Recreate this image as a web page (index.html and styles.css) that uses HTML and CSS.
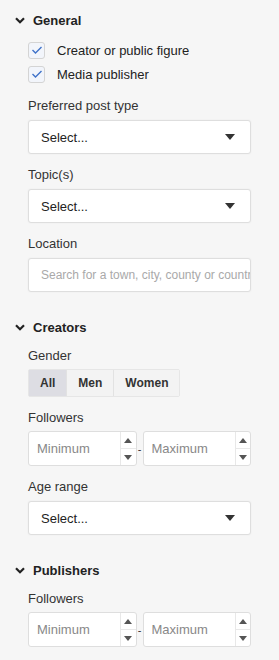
FILE: index.html
```html
<!DOCTYPE html>
<html lang="en">
<head>
  <meta charset="UTF-8">
  <meta name="viewport" content="width=device-width, initial-scale=1.0">
  <title>Filters</title>
  <link rel="stylesheet" href="styles.css">
</head>
<body>
  <div class="panel">

    <div class="section">
      <div class="section-head">
        <svg class="chevron" width="10" height="7" viewBox="0 0 10 7"><path d="M1 1.2 L5 5.2 L9 1.2" fill="none" stroke="#222" stroke-width="2.2"/></svg>
        <span>General</span>
      </div>
      <div class="section-body">
        <div class="checks">
          <label class="check"><span class="box"><svg width="12" height="10" viewBox="0 0 12 10"><path d="M1.5 5 L4.5 8 L10.5 2" fill="none" stroke="#3f72c9" stroke-width="1.4"/></svg></span>Creator or public figure</label>
          <label class="check"><span class="box"><svg width="12" height="10" viewBox="0 0 12 10"><path d="M1.5 5 L4.5 8 L10.5 2" fill="none" stroke="#3f72c9" stroke-width="1.4"/></svg></span>Media publisher</label>
        </div>
        <div class="field">
          <div class="label">Preferred post type</div>
          <div class="select"><span>Select...</span><span class="caret"></span></div>
        </div>
        <div class="field">
          <div class="label">Topic(s)</div>
          <div class="select"><span>Select...</span><span class="caret"></span></div>
        </div>
        <div class="field">
          <div class="label">Location</div>
          <div class="text-input"><input type="text" placeholder="Search for a town, city, county or country"></div>
        </div>
      </div>
    </div>

    <div class="section">
      <div class="section-head">
        <svg class="chevron" width="10" height="7" viewBox="0 0 10 7"><path d="M1 1.2 L5 5.2 L9 1.2" fill="none" stroke="#222" stroke-width="2.2"/></svg>
        <span>Creators</span>
      </div>
      <div class="section-body">
        <div class="field">
          <div class="label">Gender</div>
          <div class="seg">
            <button class="seg-btn active">All</button>
            <button class="seg-btn">Men</button>
            <button class="seg-btn">Women</button>
          </div>
        </div>
        <div class="field">
          <div class="label">Followers</div>
          <div class="range">
            <div class="num"><input type="text" placeholder="Minimum"><div class="spin"><span class="up"></span><span class="down"></span></div></div>
            <span class="dash">-</span>
            <div class="num"><input type="text" placeholder="Maximum"><div class="spin"><span class="up"></span><span class="down"></span></div></div>
          </div>
        </div>
        <div class="field">
          <div class="label">Age range</div>
          <div class="select"><span>Select...</span><span class="caret"></span></div>
        </div>
      </div>
    </div>

    <div class="section">
      <div class="section-head">
        <svg class="chevron" width="10" height="7" viewBox="0 0 10 7"><path d="M1 1.2 L5 5.2 L9 1.2" fill="none" stroke="#222" stroke-width="2.2"/></svg>
        <span>Publishers</span>
      </div>
      <div class="section-body">
        <div class="field">
          <div class="label">Followers</div>
          <div class="range">
            <div class="num"><input type="text" placeholder="Minimum"><div class="spin"><span class="up"></span><span class="down"></span></div></div>
            <span class="dash">-</span>
            <div class="num"><input type="text" placeholder="Maximum"><div class="spin"><span class="up"></span><span class="down"></span></div></div>
          </div>
        </div>
      </div>
    </div>

  </div>
</body>
</html>
```

FILE: styles.css
```css
body {
  margin: 0;
  background-color: #f6f6f6;
  font-family: 'Liberation Sans', Arial, sans-serif;
  font-size: 13px;
  color: #222;
}
.panel {
  padding: 12px 28px 0 14px;
}
.section + .section {
  margin-top: 27px;
}
.section-head {
  display: flex;
  align-items: center;
  height: 16px;
  font-weight: bold;
  font-size: 13px;
}
.chevron {
  margin-left: 1px;
  margin-right: 8px;
}
.section-body {
  padding-left: 14px;
  margin-top: 13px;
}
.checks {
  display: flex;
  flex-direction: column;
  gap: 8px;
  padding-top: 1px;
}
.check {
  display: flex;
  align-items: center;
  height: 16px;
  gap: 12px;
}
.box {
  width: 15px;
  height: 15px;
  border: 1px solid #d4d4d4;
  border-radius: 3px;
  background: #f2f5fb;
  display: flex;
  align-items: center;
  justify-content: center;
}
.checks + .field {
  margin-top: 16px;
}
.field + .field {
  margin-top: 13px;
}
.label {
  height: 16px;
  line-height: 16px;
  margin-bottom: 6px;
  color: #333;
}
.select, .text-input {
  height: 32px;
  background: #fff;
  border: 1px solid #dedede;
  border-radius: 3px;
  box-shadow: 0 0 2px rgba(0, 0, 0, 0.06);
  display: flex;
  align-items: center;
  justify-content: space-between;
  padding: 0 15px 0 12px;
  color: #222;
}
.caret {
  width: 0;
  height: 0;
  border-left: 5px solid transparent;
  border-right: 5px solid transparent;
  border-top: 6px solid #333;
}
.text-input {
  padding: 0 0 0 12px;
  overflow: hidden;
}
.text-input input, .num input {
  border: none;
  outline: none;
  background: transparent;
  font-family: inherit;
  width: 100%;
  padding: 0;
}
.text-input input {
  font-size: 12px;
}
input::placeholder {
  color: #a9a9a9;
}
.seg {
  display: flex;
  width: max-content;
  border: 1px solid #e6e6e6;
  border-radius: 2px;
  margin-top: -1px;
}
.seg-btn {
  height: 26px;
  border: none;
  background: #f3f3f3;
  font-family: inherit;
  font-size: 12px;
  font-weight: bold;
  color: #333;
  padding: 0 11px;
}
.seg-btn + .seg-btn {
  border-left: 1px solid #e2e2e2;
}
.seg-btn.active {
  background: #dddde3;
}
.range {
  display: flex;
  align-items: center;
  margin-top: -1px;
}
.num {
  flex: 1;
  height: 33px;
  display: flex;
  background: #fff;
  border: 1px solid #dedede;
  border-radius: 3px;
}
.num input {
  font-size: 13px;
  padding-left: 8px;
  min-width: 0;
}
.num input::placeholder {
  color: #888;
}
.dash {
  width: 6px;
  text-align: center;
  font-size: 11px;
  color: #333;
}
.spin {
  width: 18px;
  border-left: 1px solid #e8e8e8;
  display: flex;
  flex-direction: column;
}
.spin span {
  flex: 1;
  display: flex;
  align-items: center;
  justify-content: center;
}
.spin .up {
  border-bottom: 1px solid #e8e8e8;
}
.spin .up::after {
  content: "";
  border-left: 4px solid transparent;
  border-right: 4px solid transparent;
  border-bottom: 5px solid #555;
}
.spin .down::after {
  content: "";
  border-left: 4px solid transparent;
  border-right: 4px solid transparent;
  border-top: 5px solid #555;
}
```
